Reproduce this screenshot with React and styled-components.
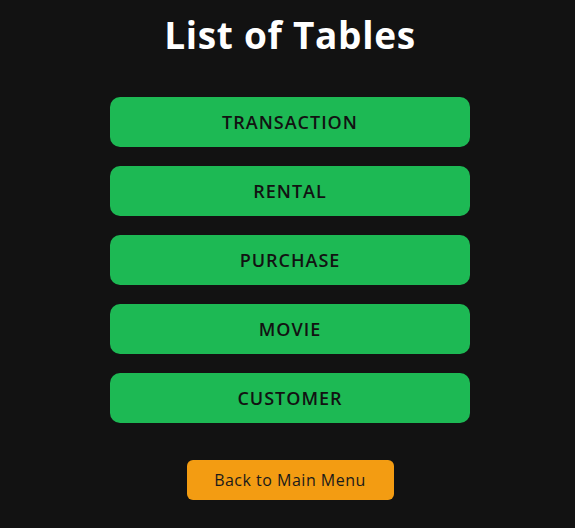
import React from "react";
import styled, { createGlobalStyle } from "styled-components";

const Global = createGlobalStyle`
  html, body { margin: 0; padding: 0; background: #121212; }
  body { font-family: "Open Sans", "Noto Sans", Arial, sans-serif; }
`;

const Page = styled.div`
  min-height: 528px;
  display: flex;
  flex-direction: column;
  align-items: center;
  background: #121212;
  box-sizing: border-box;
  padding: 10px 0 0 5px;
`;

const Title = styled.h1`
  margin: 0;
  color: #ffffff;
  font-family: "Open Sans", sans-serif;
  font-weight: 700;
  font-size: 37px;
  line-height: 50px;
  letter-spacing: 0.7px;
`;

const List = styled.div`
  margin-top: 37px;
  display: flex;
  flex-direction: column;
  gap: 19px;
`;

const TableButton = styled.button`
  width: 360px;
  height: 50px;
  border: none;
  border-radius: 10px;
  background: #1db954;
  color: #121212;
  font-family: "Open Sans", sans-serif;
  font-weight: 600;
  font-size: 18px;
  letter-spacing: 1px;
  line-height: 46px;
  cursor: pointer;
  padding: 0;
`;

const BackButton = styled.button`
  margin-top: 37px;
  width: 207px;
  height: 40px;
  border: none;
  border-radius: 6px;
  background: #f39c12;
  color: #1a1a1a;
  font-family: "Open Sans", sans-serif;
  font-weight: 500;
  font-size: 16px;
  letter-spacing: 0.5px;
  cursor: pointer;
  padding: 0;
`;

const tables = ["TRANSACTION", "RENTAL", "PURCHASE", "MOVIE", "CUSTOMER"];

export default function App() {
  return (
    <>
      <Global />
      <Page>
        <Title>List of Tables</Title>
        <List>
          {tables.map((t) => (
            <TableButton key={t}>{t}</TableButton>
          ))}
        </List>
        <BackButton>Back to Main Menu</BackButton>
      </Page>
    </>
  );
}
